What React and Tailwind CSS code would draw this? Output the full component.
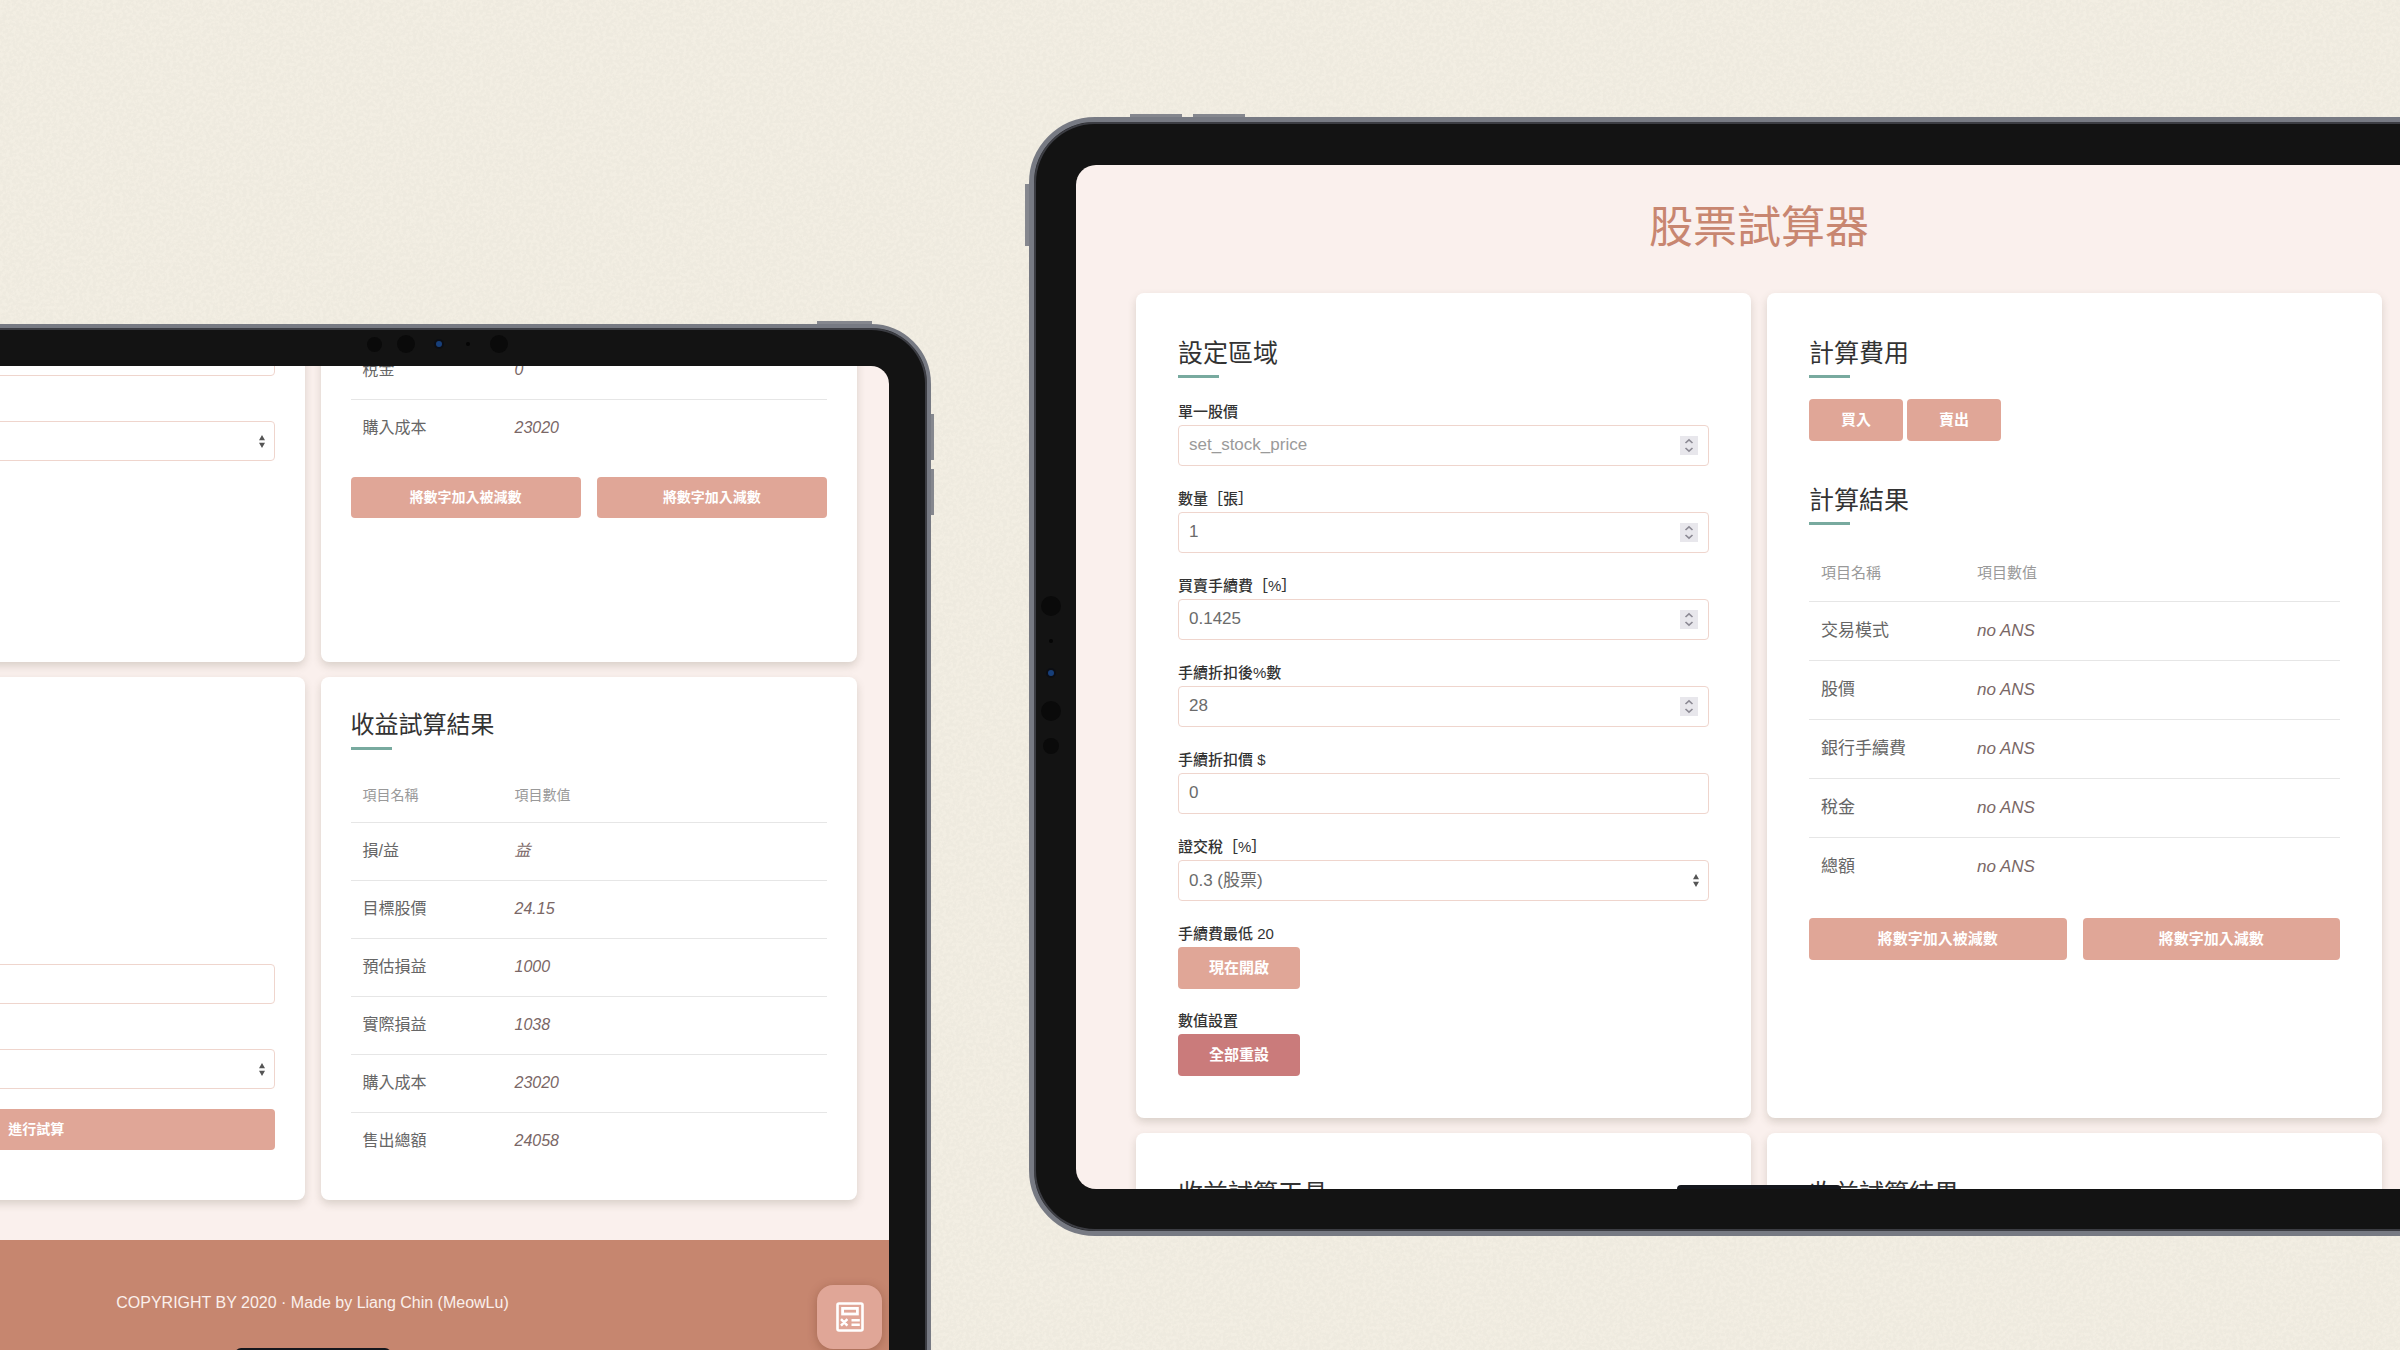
import { useId } from 'react';

const TABLE_TOP = [
  { name: '稅金', value: '0' },
  { name: '購入成本', value: '23020' },
];

const TABLE_PROFIT = [
  { name: '損/益', value: '益' },
  { name: '目標股價', value: '24.15' },
  { name: '預估損益', value: '1000' },
  { name: '實際損益', value: '1038' },
  { name: '購入成本', value: '23020' },
  { name: '售出總額', value: '24058' },
];

const TABLE_RESULT = [
  { name: '交易模式', value: 'no ANS' },
  { name: '股價', value: 'no ANS' },
  { name: '銀行手續費', value: 'no ANS' },
  { name: '稅金', value: 'no ANS' },
  { name: '總額', value: 'no ANS' },
];

// Two zoom levels of the same page, one for each tablet
const SIZES = {
  md: {
    card: 'p-[30px]',
    heading: 'text-[24px] mb-5',
    label: 'text-[14px] mb-[3px]',
    field: 'mb-5',
    control: 'h-10 text-[16px]',
    button: 'h-[41px] text-[14px]',
    th: 'h-[52px] text-[14px]',
    td: 'h-[58px] text-[16px]',
    firstCol: 'w-[152px]',
  },
  lg: {
    card: 'p-[42px]',
    heading: 'text-[25px] mb-[21px]',
    label: 'text-[15px] mb-[2px]',
    field: 'mb-[22px]',
    control: 'h-[41px] text-[17px]',
    button: 'h-[42px] text-[15px]',
    th: 'h-[55px] text-[15px]',
    td: 'h-[59px] text-[17px]',
    firstCol: 'w-[156px]',
  },
};

const Card = ({ size, className = '', children }) => (
  <section className={`flex flex-col rounded-lg bg-white shadow-[0_4px_8px_rgba(90,80,60,0.2)] ${SIZES[size].card} ${className}`}>
    {children}
  </section>
);

const Heading = ({ size, className = '', children }) => (
  <h2 className={`leading-9 text-[#333] ${SIZES[size].heading} ${className}`}>
    {children}
    <span className="block mt-1 w-[41px] h-[3px] bg-[#78aa9f]" />
  </h2>
);

const Button = ({ size, tone = 'bg-[#e0a697]', className = '', children }) => (
  <button type="button" className={`rounded font-bold text-white ${tone} ${SIZES[size].button} ${className}`}>
    {children}
  </button>
);

const Stepper = () => (
  <svg className="w-[18px] h-[19px] shrink-0 mr-2.5" viewBox="0 0 18 19" fill="none" aria-hidden="true">
    <rect width="18" height="19" fill="#e8e7ec" />
    <path d="M5.5 7 9 3.8 12.5 7M5.5 12 9 15.2 12.5 12" stroke="#8b8993" strokeWidth="1.6" />
  </svg>
);

const Label = ({ size, htmlFor, children }) => (
  <label htmlFor={htmlFor} className={`block leading-[22px] font-medium text-[#333] ${SIZES[size].label}`}>
    {children}
  </label>
);

const NumberField = ({ size, label, value, placeholder, stepper = false }) => {
  const id = useId();
  return (
    <div className={SIZES[size].field}>
      <Label size={size} htmlFor={id}>{label}</Label>
      <div className={`flex items-center rounded border border-[#efd5cd] bg-white ${SIZES[size].control}`}>
        <input
          id={id}
          type="text"
          inputMode="decimal"
          defaultValue={value}
          placeholder={placeholder}
          className="flex-1 min-w-0 h-full px-2.5 pb-0.5 bg-transparent text-[#6b6b6b] placeholder:text-[#9a9a9a] outline-none"
        />
        {stepper && <Stepper />}
      </div>
    </div>
  );
};

const SelectField = ({ size, label, options }) => {
  const id = useId();
  return (
    <div className={SIZES[size].field}>
      <Label size={size} htmlFor={id}>{label}</Label>
      <div className={`flex items-center rounded border border-[#efd5cd] bg-white ${SIZES[size].control}`}>
        <select id={id} className="flex-1 min-w-0 h-full pl-2.5 appearance-none bg-transparent text-[#6b6b6b] outline-none">
          {options.map((option) => (
            <option key={option}>{option}</option>
          ))}
        </select>
        <svg className="w-[6px] h-[13px] shrink-0 mr-[9px]" viewBox="0 0 6 13" fill="#555" aria-hidden="true">
          <path d="M0 5.2 3 0l3 5.2zM0 7.8 3 13l3-5.2z" />
        </svg>
      </div>
    </div>
  );
};

const ResultTable = ({ size, rows, header = true }) => {
  const s = SIZES[size];
  return (
    <table className="w-full table-fixed border-collapse text-left">
      <colgroup>
        <col className={s.firstCol} />
        <col />
      </colgroup>
      {header && (
        <thead>
          <tr className="border-b border-[#e6e6e6] text-[#999]">
            <th className={`px-3 font-normal ${s.th}`}>項目名稱</th>
            <th className={`px-3 font-normal ${s.th}`}>項目數值</th>
          </tr>
        </thead>
      )}
      <tbody>
        {rows.map((row) => (
          <tr key={row.name} className="border-b border-[#e6e6e6] last:border-b-0">
            <td className={`px-3 text-[#666] ${s.td}`}>{row.name}</td>
            <td className={`px-3 text-[#7a6766] italic ${s.td}`}>{row.value}</td>
          </tr>
        ))}
      </tbody>
    </table>
  );
};

const AddButtons = ({ size, className }) => (
  <div className={`grid grid-cols-2 gap-4 ${className}`}>
    <Button size={size}>將數字加入被減數</Button>
    <Button size={size}>將數字加入減數</Button>
  </div>
);

const CalculatorIcon = () => (
  <svg className="w-7 h-[30px]" viewBox="0 0 28 30" fill="none" stroke="#fff" aria-hidden="true">
    <rect x="1.5" y="1.5" width="25" height="27" rx="1.5" strokeWidth="2.6" />
    <rect x="6.6" y="6.4" width="14.8" height="5.6" strokeWidth="2.8" />
    <path d="M5 17.2l6.4 6.4M11.4 17.2L5 23.6M15.5 18.2h8.3M15.5 22.8h8.3" strokeWidth="2.5" />
  </svg>
);

const Lens = ({ className = '' }) => (
  <span className={`flex items-center justify-center w-2.5 h-2.5 rounded-full bg-[#0c0e14] ${className}`}>
    <span className="w-1.5 h-1.5 rounded-full bg-[#173f7a]" />
  </span>
);

const CalculatorTablet = () => (
  <div className="relative shrink-0 w-[1237px] h-[1101px] -ml-[306px] mt-[324px] rounded-[60px] border-4 border-[#777a83] bg-[#131313] p-[38px] shadow-[inset_0_0_0_2px_#3c3d43]">
    {/* hardware buttons */}
    <span className="absolute -top-[7px] right-[55px] w-[55px] h-[3px] bg-[#85878e]" />
    <span className="absolute top-[86px] -right-[7px] w-[3px] h-[46px] bg-[#85878e]" />
    <span className="absolute top-[141px] -right-[7px] w-[3px] h-[46px] bg-[#85878e]" />
    {/* camera row */}
    <div className="absolute top-[7px] left-[669px] flex items-center">
      <span className="w-[15px] h-[15px] rounded-full bg-[#0a0a0a]" />
      <span className="w-[18px] h-[18px] ml-[15px] rounded-full bg-[#0a0a0a]" />
      <Lens className="ml-[19px]" />
      <span className="w-1 h-1 ml-[22px] rounded-full bg-[#050505]" />
      <span className="w-[18px] h-[18px] ml-[20px] rounded-full bg-[#0a0a0a]" />
    </div>

    <div className="relative flex flex-col h-full rounded-[18px] overflow-hidden bg-[#faf0ed]">
      {/* the page is scrolled down, its first row starts above the screen */}
      <div className="grid grid-cols-2 gap-x-4 gap-y-[15px] px-8 -mt-[30px]">
        <Card size="md" className="h-[326px] pt-[0px]!">
          <div className="-mt-[25px]">
            <NumberField size="md" label="手續折扣價 $" value="" />
            <SelectField size="md" label="證交稅［%］" options={['']} />
          </div>
        </Card>
        <Card size="md" className="pt-[5px]!">
          <ResultTable size="md" rows={TABLE_TOP} header={false} />
          <AddButtons size="md" className="mt-5" />
        </Card>
        <Card size="md">
          <Heading size="md">收益試算工具</Heading>
          <div className="mt-auto">
            <NumberField size="md" label="預估損益" value="" />
            <SelectField size="md" label="證交稅［%］" options={['']} />
          </div>
          <Button size="md" className="mb-5">進行試算</Button>
        </Card>
        <Card size="md">
          <Heading size="md">收益試算結果</Heading>
          <ResultTable size="md" rows={TABLE_PROFIT} />
        </Card>
      </div>
      <footer className="flex-1 mt-10 pt-[51px] bg-[#c6866f] text-center text-[16px] leading-6 text-[#fbf0ec]">
        COPYRIGHT BY 2020 · Made by Liang Chin (MeowLu)
      </footer>
      <button
        type="button"
        aria-label="calculator"
        className="absolute right-[7px] bottom-[34px] flex items-center justify-center w-[65px] h-16 rounded-2xl bg-[#e0a697] shadow-[0_2px_10px_rgba(100,50,30,0.35)]"
      >
        <CalculatorIcon />
      </button>
      <span className="absolute bottom-0 left-1/2 -translate-x-1/2 w-[156px] h-[35px] rounded-t-md bg-[#14171d]" />
    </div>
  </div>
);

const SettingsTablet = () => (
  <div className="relative shrink-0 w-[1460px] h-[1119px] ml-[98px] mt-[117px] rounded-[66px] border-[5px] border-[#777a83] bg-[#131313] p-[42px] pt-[43px] shadow-[inset_0_0_0_2px_#3c3d43]">
    <span className="absolute -top-2 left-[96px] w-[52px] h-[3px] bg-[#85878e]" />
    <span className="absolute -top-2 left-[159px] w-[52px] h-[3px] bg-[#85878e]" />
    <span className="absolute top-[62px] -left-[9px] w-1 h-[62px] bg-[#85878e]" />
    <div className="absolute top-[474px] left-[7px] flex flex-col items-center">
      <span className="w-5 h-5 rounded-full bg-[#0a0a0a]" />
      <span className="w-1 h-1 mt-[23px] rounded-full bg-[#050505]" />
      <Lens className="mt-[25px]" />
      <span className="w-5 h-5 mt-[23px] rounded-full bg-[#0a0a0a]" />
      <span className="w-4 h-4 mt-[17px] rounded-full bg-[#0a0a0a]" />
    </div>

    <div className="relative h-full rounded-[20px] overflow-hidden bg-[#faf0ed]">
      <h1 className="pt-[31px] pb-[33px] text-center text-[44px] leading-[64px] text-[#c88670]">股票試算器</h1>
      <div className="grid grid-cols-2 gap-x-4 gap-y-[15px] px-[60px]">
        <Card size="lg">
          <Heading size="lg">設定區域</Heading>
          <form className="pt-[2px]">
            <NumberField size="lg" label="單一股價" placeholder="set_stock_price" stepper />
            <NumberField size="lg" label="數量［張］" value="1" stepper />
            <NumberField size="lg" label="買賣手續費［%］" value="0.1425" stepper />
            <NumberField size="lg" label="手續折扣後%數" value="28" stepper />
            <NumberField size="lg" label="手續折扣價 $" value="0" />
            <SelectField size="lg" label="證交稅［%］" options={['0.3 (股票)', '0.1 (ETF)']} />
            <div className="mb-[21px]">
              <p className="leading-[22px] mb-[2px] text-[15px] font-medium text-[#333]">手續費最低 20</p>
              <Button size="lg" className="w-[122px]">現在開啟</Button>
            </div>
            <div>
              <p className="leading-[22px] mb-[2px] text-[15px] font-medium text-[#333]">數值設置</p>
              <Button size="lg" tone="bg-[#ca7b7b]" className="w-[122px]">全部重設</Button>
            </div>
          </form>
        </Card>
        <Card size="lg">
          <Heading size="lg">計算費用</Heading>
          <div className="flex gap-1">
            <Button size="lg" className="w-[94px]">買入</Button>
            <Button size="lg" className="w-[94px]">賣出</Button>
          </div>
          <Heading size="lg" className="mt-[41px]">計算結果</Heading>
          <ResultTable size="lg" rows={TABLE_RESULT} />
          <AddButtons size="lg" className="mt-[22px]" />
        </Card>
        <Card size="lg">
          <Heading size="lg">收益試算工具</Heading>
        </Card>
        <Card size="lg">
          <Heading size="lg">收益試算結果</Heading>
        </Card>
      </div>
      <span className="absolute bottom-0 left-1/2 -translate-x-1/2 w-[164px] h-1 rounded-t-lg bg-[#14171d]" />
    </div>
  </div>
);

const PaperTexture = () => (
  <svg className="absolute inset-0 w-full h-full opacity-60" aria-hidden="true">
    <filter id="paper" colorInterpolationFilters="sRGB">
      <feTurbulence type="fractalNoise" baseFrequency="0.3" numOctaves="3" />
      <feColorMatrix values="0 0 0 0 0.965  0 0 0 0 0.945  0 0 0 0 0.9  4 0 0 0 -1.6" />
    </filter>
    <rect width="100%" height="100%" filter="url(#paper)" />
  </svg>
);

export default function App() {
  return (
    <main className="relative flex items-start h-screen overflow-hidden bg-[#eeeadf] font-['Liberation_Sans','Noto_Sans_CJK_TC',sans-serif]">
      <PaperTexture />
      <CalculatorTablet />
      <SettingsTablet />
    </main>
  );
}
